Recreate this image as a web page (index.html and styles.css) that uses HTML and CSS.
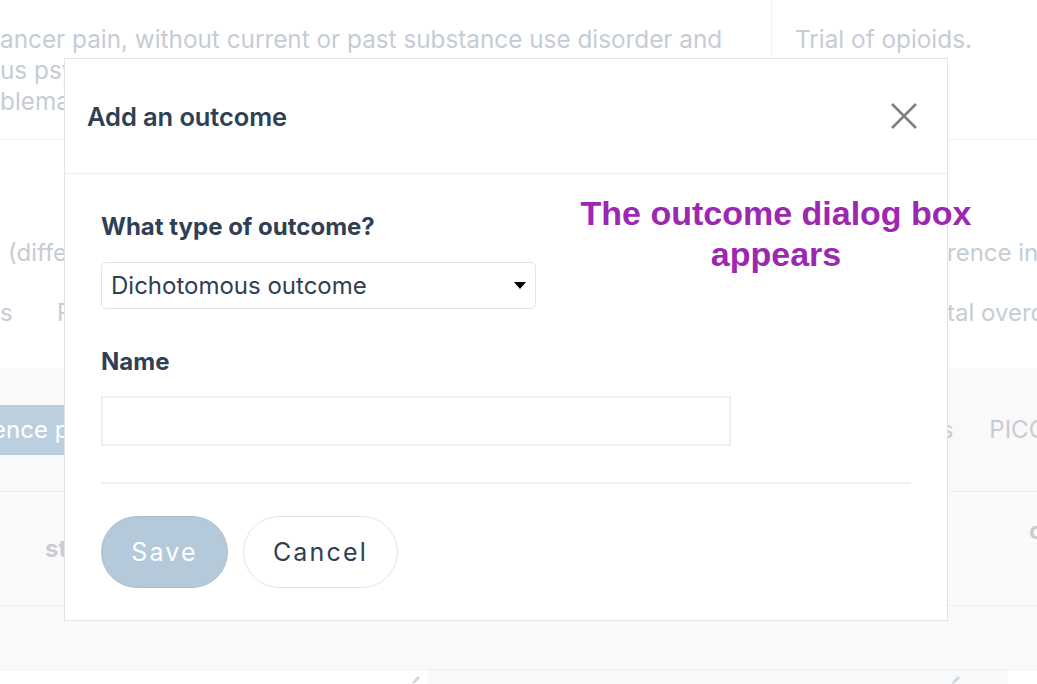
FILE: index.html
```html
<!DOCTYPE html>
<html lang="en">
<head>
<meta charset="utf-8">
<title>Add an outcome</title>
<link rel="stylesheet" href="styles.css">
</head>
<body>
<div class="page">
  <section class="top">
    <div class="cell-left">
      <p>ancer pain, without current or past substance use disorder and</p>
      <p>us psychiatric disorders or history of</p>
      <p>blematic use of opioids</p>
    </div>
    <div class="cell-right">
      <p>Trial of opioids.</p>
    </div>
  </section>

  <section class="middle">
    <div class="mrow">
      <span class="m-left diff">(difference in pain scores)</span>
      <span class="m-right">rence in</span>
    </div>
    <div class="mrow">
      <span class="m-left"><span class="s">s</span><span class="p">P</span></span>
      <span class="m-right">tal overdose</span>
    </div>
  </section>

  <section class="gray">
    <div class="tabs">
      <span class="pill">ence profile</span>
      <span class="tabs-right"><span class="ts">s</span>PICO</span>
    </div>
    <div class="grow">
      <span class="st">st</span>
      <span class="gc">c</span>
    </div>
    <div class="gfoot"></div>
  </section>

  <section class="bottom">
    <div class="b1"><svg class="pen" width="12" height="12" viewBox="0 0 12 12"><path d="M2 10 L3 7 L8 2 L10 4 L5 9 Z" fill="#d3d6da"/></svg></div>
    <div class="b2"><svg class="pen" width="12" height="12" viewBox="0 0 12 12"><path d="M2 10 L3 7 L8 2 L10 4 L5 9 Z" fill="#d3d6da"/></svg></div>
    <div class="b3"></div>
  </section>

  <div class="modal" role="dialog" aria-label="Add an outcome">
    <header class="modal-head">
      <h2>Add an outcome</h2>
      <button class="close" aria-label="Close">
        <svg width="28" height="28" viewBox="0 0 28 28"><path d="M2 2 L26 26 M26 2 L2 26" stroke="#808080" stroke-width="2.6" fill="none"/></svg>
      </button>
    </header>
    <div class="modal-body">
      <label class="lbl lbl-type">What type of outcome?</label>
      <div class="select-wrap">
        <select class="select">
          <option>Dichotomous outcome</option>
        </select>
        <svg class="caret" width="12" height="7" viewBox="0 0 12 7"><path d="M0 0 H12 L6 7 Z" fill="#000"/></svg>
      </div>
      <label class="lbl lbl-name">Name</label>
      <input class="input" type="text">
      <hr class="sep">
      <div class="actions">
        <button class="btn save">Save</button>
        <button class="btn cancel">Cancel</button>
      </div>
    </div>
  </div>

  <div class="note">The outcome dialog box<br>appears</div>
</div>
</body>
</html>
```

FILE: styles.css
```css
* { box-sizing: border-box; }
html, body { margin: 0; padding: 0; }
body {
  width: 1037px;
  height: 684px;
  overflow: hidden;
  background: #fff;
  font-family: Inter, "Noto Sans", sans-serif;
}
.page { position: relative; width: 1037px; height: 684px; overflow: hidden; }
p { margin: 0; }

.top {
  display: grid;
  grid-template-columns: 772px 1fr;
  height: 140px;
  border-bottom: 1px solid #eef0f2;
}
.cell-left {
  border-right: 1px solid #eef0f2;
  padding-top: 24px;
  color: #c6ccd5;
  font-size: 24.3px;
  line-height: 31px;
  white-space: nowrap;
  overflow: hidden;
}
.cell-right {
  padding: 24px 0 0 23px;
  color: #c6ccd5;
  font-size: 24.3px;
  line-height: 31px;
}

.middle {
  height: 228px;
  padding-top: 98px;
  color: #c6ccd5;
  font-size: 24px;
  line-height: 30px;
}
.mrow { display: flex; height: 30px; margin-bottom: 30px; white-space: nowrap; }
.m-left { width: 947px; overflow: hidden; display: flex; }
.diff { padding-left: 8px; }
.s { width: 57px; }
.m-right { flex: 1; overflow: hidden; }

.gray {
  background: #f9f9f9;
  height: 301px;
  display: flex;
  flex-direction: column;
}
.tabs {
  height: 124px;
  display: flex;
  align-items: center;
  justify-content: space-between;
  border-bottom: 1px solid #efefef;
  white-space: nowrap;
  overflow: hidden;
}
.pill {
  background: #bccfdf;
  color: #fff;
  font-size: 24px;
  line-height: 50px;
  height: 50px;
  padding: 0 20px 0 0;
  text-indent: -8px;
}
.tabs-right { color: #c6ccd5; font-size: 24px; margin-right: -10px; }
.ts { margin-right: 36px; }
.grow {
  height: 114px;
  position: relative;
  display: flex;
  justify-content: space-between;
  border-bottom: 1px solid #efefef;
  color: #c8cdd3;
  font-weight: 700;
  font-size: 24px;
  background: #fafafa;
}
.st { padding: 42px 0 0 45px; }
.gc { padding: 24px 0 0 0; margin-right: -6px; }
.gfoot { flex: 1; }

.bottom {
  display: grid;
  grid-template-columns: 428px 580px 1fr;
  height: 15px;
  border-top: 1px solid #efefef;
}
.b1, .b2 { display: flex; justify-content: flex-end; padding-right: 6px; padding-top: 4px; }
.b1 { background: #fff; }
.b2 { background: #f8f9fa; padding-right: 46px; }
.b3 { background: #fff; }

/* modal */
.modal {
  position: absolute;
  left: 64px;
  top: 58px;
  width: 884px;
  height: 563px;
  background: #fff;
  border: 1px solid #e3e3e3;
  color: #2f4054;
}
.modal-head {
  height: 115px;
  display: flex;
  align-items: center;
  justify-content: space-between;
  padding: 0 29px 0 22px;
  border-bottom: 1px solid #ececec;
}
.modal-head h2 {
  margin: 0;
  font-size: 25.5px;
  font-weight: 600;
  letter-spacing: -0.1px;
}
.close {
  border: 0;
  background: none;
  padding: 0;
  width: 28px;
  height: 28px;
  display: flex;
}
.modal-body {
  padding: 38px 36px 0 36px;
  display: flex;
  flex-direction: column;
  align-items: flex-start;
}
.lbl {
  font-size: 24px;
  font-weight: 700;
  line-height: 30px;
}
.lbl-type { margin-bottom: 20px; }
.select-wrap { position: relative; width: 435px; }
.select {
  appearance: none;
  -webkit-appearance: none;
  width: 435px;
  height: 47px;
  border: 1px solid #e4e4e4;
  border-radius: 5px;
  background: #fff;
  font-family: inherit;
  font-size: 24px;
  color: #2f4054;
  padding: 0 0 0 9px;
}
.caret { position: absolute; right: 10px; top: 20px; }
.lbl-name { margin-top: 38px; margin-bottom: 19px; }
.input {
  width: 630px;
  height: 50px;
  border: 2px solid #efefef;
  border-radius: 0;
  background: #fff;
}
.sep {
  align-self: stretch;
  border: 0;
  border-top: 2px solid #efefef;
  margin: 36px 0 32px 0;
}
.actions { display: flex; gap: 15px; }
.btn {
  height: 72px;
  border-radius: 36px;
  font-family: inherit;
  font-size: 25px;
  letter-spacing: 2.2px;
  padding: 0;
}
.save {
  width: 127px;
  background: #b4c9da;
  color: #fff;
  border: 1px solid #aebfcd;
}
.cancel {
  width: 155px;
  background: #fff;
  color: #2f4054;
  border: 1px solid #e2e2e2;
}

.note {
  position: absolute;
  left: 546px;
  top: 193px;
  width: 460px;
  text-align: center;
  color: #9c27b0;
  font-family: "Liberation Sans", Arial, sans-serif;
  font-weight: 700;
  font-size: 34px;
  line-height: 41px;
}
```
